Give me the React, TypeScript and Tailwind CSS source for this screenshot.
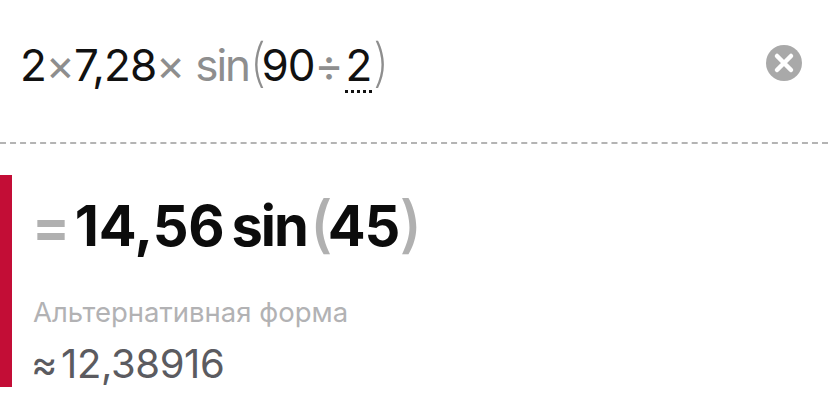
import React from 'react';

const font = { fontFamily: 'Inter, "Liberation Sans", sans-serif' };

function ClearIcon() {
  return (
    <svg width="36" height="36" viewBox="0 0 36 36">
      <circle cx="18" cy="18" r="18" fill="#a9a9a9" />
      <path d="M11 11L25 25M25 11L11 25" stroke="#fff" strokeWidth="4.5" strokeLinecap="round" />
    </svg>
  );
}

export default function App() {
  return (
    <div className="w-[828px] h-[416px] bg-white overflow-hidden" style={font}>
      {/* Input row */}
      <div className="h-[144px] pl-[20px] pr-[26px] pt-[44px] flex justify-between border-b-2 border-dashed border-[#b4b4b4]">
        <div className="flex items-baseline h-[44px] text-[44px] leading-[44px] tracking-[-1px] text-[#111] font-normal -mt-[3px]">
          <span>2</span>
          <span className="text-[#8e8e8e]">×</span>
          <span>7,28</span>
          <span className="text-[#8e8e8e]">×</span>
          <span className="text-[#8e8e8e] ml-[11px] tracking-[-2px]">sin</span>
          <span className="text-[#8e8e8e] font-extralight text-[52px] leading-[44px] tracking-[-5px]">(</span>
          <span>90</span>
          <span className="text-[#8e8e8e] mr-[3px]">÷</span>
          <span className="underline decoration-dotted decoration-[3px] underline-offset-[9px] tracking-[0px]">2</span>
          <span className="text-[#8e8e8e] font-extralight text-[52px] leading-[44px] tracking-[-1px]">)</span>
        </div>
        <div className="mt-[1px]">
          <ClearIcon />
        </div>
      </div>

      {/* Result */}
      <div className="mt-[31px] h-[212px] border-l-[12px] border-[#c30d36] pl-[21px] pt-[21px]">
        <div className="flex items-baseline h-[56px] text-[56px] leading-[56px] font-bold tracking-[-0.2px] text-[#0c0c0c]">
          <span className="text-[#b0b0b0] mr-[5px] -ml-[1px]">=</span>
          <span>14,56</span>
          <span className="ml-[7px] tracking-[-2px]">sin</span>
          <span className="text-[#b0b0b0] font-medium text-[62px] leading-[56px] ml-[3px] tracking-[-5px]">(</span>
          <span className="tracking-[-1px]">45</span>
          <span className="text-[#b0b0b0] font-medium text-[62px] leading-[56px]">)</span>
        </div>
        <p className="mt-[44px] text-[27.5px] leading-[32px] text-[#b2b2b4]">Альтернативная форма</p>
        <p className="mt-[16px] -ml-[2px] text-[40px] leading-[40px] tracking-[-0.4px] text-[#5b5b60]">
          <span className="mr-[4px]">≈</span>12,38916
        </p>
      </div>
    </div>
  );
}
